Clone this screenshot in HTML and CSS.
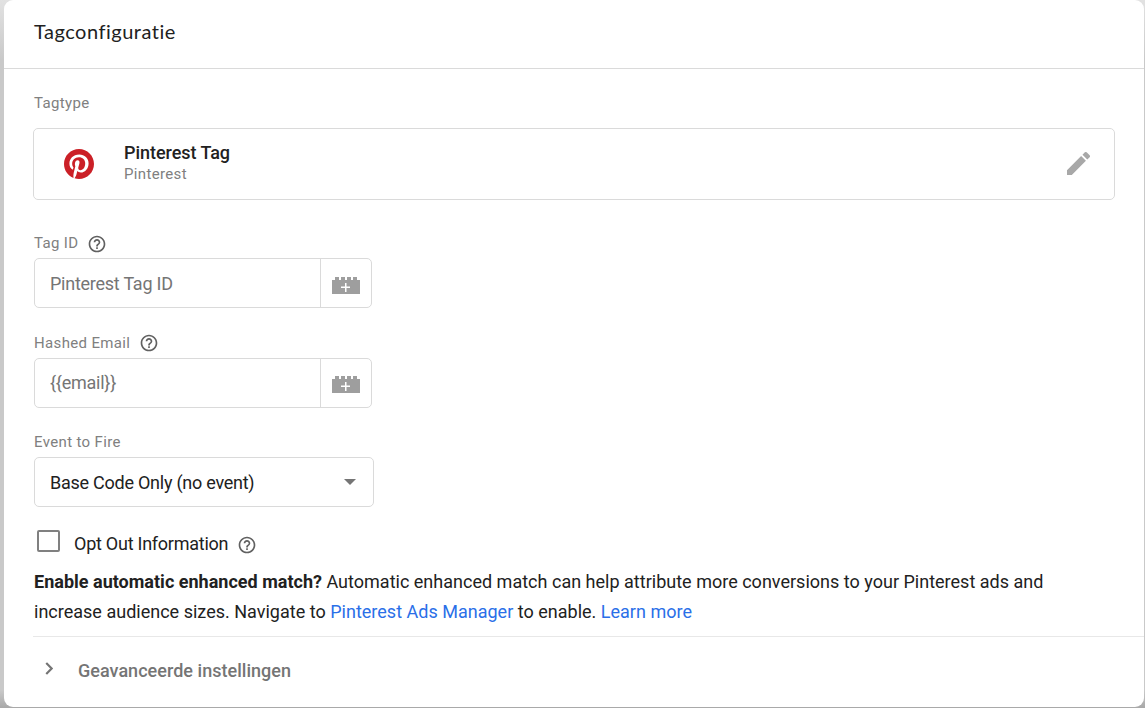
FILE: index.html
```
<!DOCTYPE html>
<html lang="nl">
<head>
    <meta charset="UTF-8">
    <meta name="viewport" content="width=device-width, initial-scale=1.0">
    <title>Tagconfiguratie</title>
    <link rel="stylesheet" href="styles.css">
</head>
<body>

    <!-- Shared icons -->
    <svg class="sprite" width="0" height="0">
        <symbol id="help" viewBox="0 0 24 24">
            <path d="M11 18h2v-2h-2v2zm1-16C6.480 2 2 6.480 2 12s4.480 10 10 10 10-4.480 10-10S17.520 2 12 2zm0 18c-4.410 0-8-3.590-8-8s3.590-8 8-8 8 3.590 8 8-3.590 8-8 8zm0-14c-2.210 0-4 1.790-4 4h2c0-1.100.9-2 2-2s2 .9 2 2c0 2-3 1.750-3 5h2c0-2.250 3-2.500 3-5 0-2.210-1.790-4-4-4z"/>
        </symbol>
        <symbol id="brick" viewBox="0 0 28 17">
            <path fill="#9e9e9e" d="M0 3h3V0h4v3h2V0h4v3h2V0h4v3h2V0h4v3h3v14H0z"/>
            <path fill="#fff" d="M13 6h1.500v3.500H18V11h-3.500v4H13v-4H9V9.500h4z"/>
        </symbol>
    </svg>

    <div class="card">
        <div class="card-header">
            <h1>Tagconfiguratie</h1>
        </div>

        <div class="card-body">
            <div class="label label-type">Tagtype</div>
            <div class="tag-type">
                <svg class="logo" viewBox="0 0 24 24">
                    <circle cx="12" cy="12" r="11.500" fill="#fff"/>
                    <path fill="#cb2027" d="M12 0C5.373 0 0 5.372 0 12c0 5.084 3.163 9.426 7.627 11.174-.105-.949-.2-2.405.042-3.441.218-.937 1.407-5.965 1.407-5.965s-.359-.719-.359-1.782c0-1.668.967-2.914 2.171-2.914 1.023 0 1.518.769 1.518 1.690 0 1.029-.655 2.568-.994 3.995-.283 1.194.599 2.169 1.777 2.169 2.133 0 3.772-2.249 3.772-5.495 0-2.873-2.064-4.882-5.012-4.882-3.414 0-5.418 2.561-5.418 5.207 0 1.031.397 2.138.893 2.738a.36.36 0 0 1 .083.345l-.333 1.360c-.053.220-.174.267-.402.161-1.499-.698-2.436-2.889-2.436-4.649 0-3.785 2.750-7.262 7.929-7.262 4.163 0 7.398 2.967 7.398 6.931 0 4.136-2.607 7.464-6.227 7.464-1.216 0-2.359-.631-2.750-1.378l-.748 2.853c-.271 1.043-1.002 2.350-1.492 3.146 1.124.347 2.317.535 3.554.535 6.627 0 12-5.373 12-12S18.627 0 12 0z"/>
                </svg>
                <div class="tag-text">
                    <div class="tag-name">Pinterest Tag</div>
                    <div class="tag-vendor">Pinterest</div>
                </div>
                <svg class="edit" viewBox="3 3 18 18">
                    <path d="M3 17.250V21h3.750L17.810 9.940l-3.750-3.750L3 17.250zM20.710 7.040a1 1 0 0 0 0-1.410l-2.340-2.340a1 1 0 0 0-1.410 0l-1.830 1.830 3.750 3.750 1.830-1.830z"/>
                </svg>
            </div>

            <div class="label label-id">Tag ID <svg class="help help-id"><use href="#help"/></svg></div>
            <div class="field field-id">
                <input type="text" placeholder="Pinterest Tag ID">
                <button class="variable"><svg><use href="#brick"/></svg></button>
            </div>

            <div class="label label-email">Hashed Email <svg class="help"><use href="#help"/></svg></div>
            <div class="field field-email">
                <input type="text" placeholder="{{email}}">
                <button class="variable"><svg><use href="#brick"/></svg></button>
            </div>

            <div class="label label-event">Event to Fire</div>
            <div class="select">
                <span>Base Code Only (no event)</span>
                <i class="arrow"></i>
            </div>

            <div class="opt-out">
                <span class="checkbox"></span>
                <span class="opt-text">Opt Out Information</span>
                <svg class="help help-opt"><use href="#help"/></svg>
            </div>

            <p class="note">
                <b>Enable automatic enhanced match?</b> Automatic enhanced match can help attribute more conversions to your Pinterest ads and<br>
                increase audience sizes. Navigate to <a href="#">Pinterest Ads Manager</a> to enable. <a href="#">Learn more</a>
            </p>
        </div>

        <div class="advanced">
            <svg class="chevron" viewBox="0 0 8 12"><path d="M1 1l5 5-5 5"/></svg>
            <span>Geavanceerde instellingen</span>
        </div>
    </div>

</body>
</html>
```
FILE: styles.css
```
* {
    box-sizing: border-box;
}

body {
    margin: 0;
    height: 708px;
    padding: 0 1px 1px 4px;
    background: linear-gradient(#e2e2e2, #c9c9c9 60px, #c9c9c9 690px, #a8a8a8);
    font-family: Roboto, sans-serif;
    font-size: 18px;
    color: #212121;
    overflow: hidden;
}

.sprite {
    position: absolute;
}

.card {
    height: 707px;
    background-color: #fff;
    border-radius: 9px;
    overflow: hidden;
}

.card-header {
    height: 69px;
    padding: 17px 30px 0;
    border-bottom: 1px solid #dadada;
}

h1 {
    margin: 0;
    font-family: Lato, sans-serif;
    font-size: 20px;
    font-weight: 400;
    line-height: 28px;
    letter-spacing: 0.5px;
}

.card-body {
    height: 567px;
    padding: 24px 29px 0 30px;
}

.label {
    display: flex;
    align-items: center;
    height: 20px;
    font-size: 15px;
    letter-spacing: 0.35px;
    color: #808080;
}

.help {
    width: 20px;
    height: 20px;
    margin-left: 9px;
    fill: #616161;
}

.help-id {
    margin-top: 2px;
}

.tag-type {
    display: flex;
    align-items: center;
    height: 72px;
    margin: 15px 0 0 -1px;
    padding: 0 24px 0 30px;
    border: 1px solid #dadada;
    border-radius: 5px;
}

.logo {
    width: 30px;
    height: 30px;
}

.tag-text {
    flex: 1;
    margin: -3px 0 0 30px;
}

.tag-name {
    font-size: 18px;
    font-weight: 500;
    line-height: 22px;
    letter-spacing: -0.05px;
}

.tag-vendor {
    font-size: 15px;
    line-height: 20px;
    letter-spacing: 0.35px;
    color: #808080;
}

.edit {
    width: 23px;
    height: 23px;
    margin-top: -1px;
    fill: #a8a8a8;
}

.label-id {
    margin-top: 33px;
}

.field {
    display: flex;
    width: 338px;
    height: 50px;
    margin-top: 5px;
    border: 1px solid #dadada;
    border-radius: 5px;
}

.field input {
    flex: 1;
    min-width: 0;
    padding: 0 15px;
    border: none;
    background: none;
    font: inherit;
    letter-spacing: -0.25px;
    outline: none;
}

.field-email input {
    padding-bottom: 2px;
}

.field input::placeholder {
    color: #757575;
    opacity: 1;
}

.variable {
    display: flex;
    align-items: center;
    justify-content: center;
    width: 51px;
    padding: 3px 0 0;
    border: none;
    border-left: 1px solid #dadada;
    background: none;
}

.field-id .variable {
    padding-top: 5px;
}

.variable svg {
    width: 28px;
    height: 17px;
}

.label-email {
    margin-top: 25px;
}

.label-event {
    margin-top: 24px;
}

.select {
    display: flex;
    align-items: center;
    justify-content: space-between;
    width: 340px;
    height: 50px;
    margin-top: 5px;
    padding: 0 17px 0 15px;
    border: 1px solid #dadada;
    border-radius: 5px;
    letter-spacing: -0.25px;
}

.arrow {
    border: 6px solid transparent;
    border-top-color: #757575;
    border-bottom: none;
}

.opt-out {
    display: flex;
    align-items: center;
    height: 28px;
    margin-top: 23px;
    padding-left: 3px;
}

.checkbox {
    width: 23px;
    height: 22px;
    margin-top: -6px;
    border: 2px solid #808080;
    border-radius: 2px;
}

.opt-text {
    margin: -2px 0 0 14px;
    letter-spacing: -0.25px;
}

.help-opt {
    margin-top: 2px;
}

.note {
    margin: 9px 0 0;
    line-height: 30px;
    letter-spacing: 0.01px;
    white-space: nowrap;
}

.note b {
    font-weight: 700;
}

.note a {
    color: #2a6fe8;
    text-decoration: none;
}

.advanced {
    display: flex;
    align-items: center;
    height: 68px;
    margin-left: 29px;
    padding-left: 12px;
    border-top: 1px solid #e8e8e8;
    font-weight: 500;
    letter-spacing: 0.03px;
    color: #757575;
}

.chevron {
    width: 9px;
    height: 13px;
    margin: -4px 24px 0 0;
    fill: none;
    stroke: #757575;
    stroke-width: 2;
}
```
